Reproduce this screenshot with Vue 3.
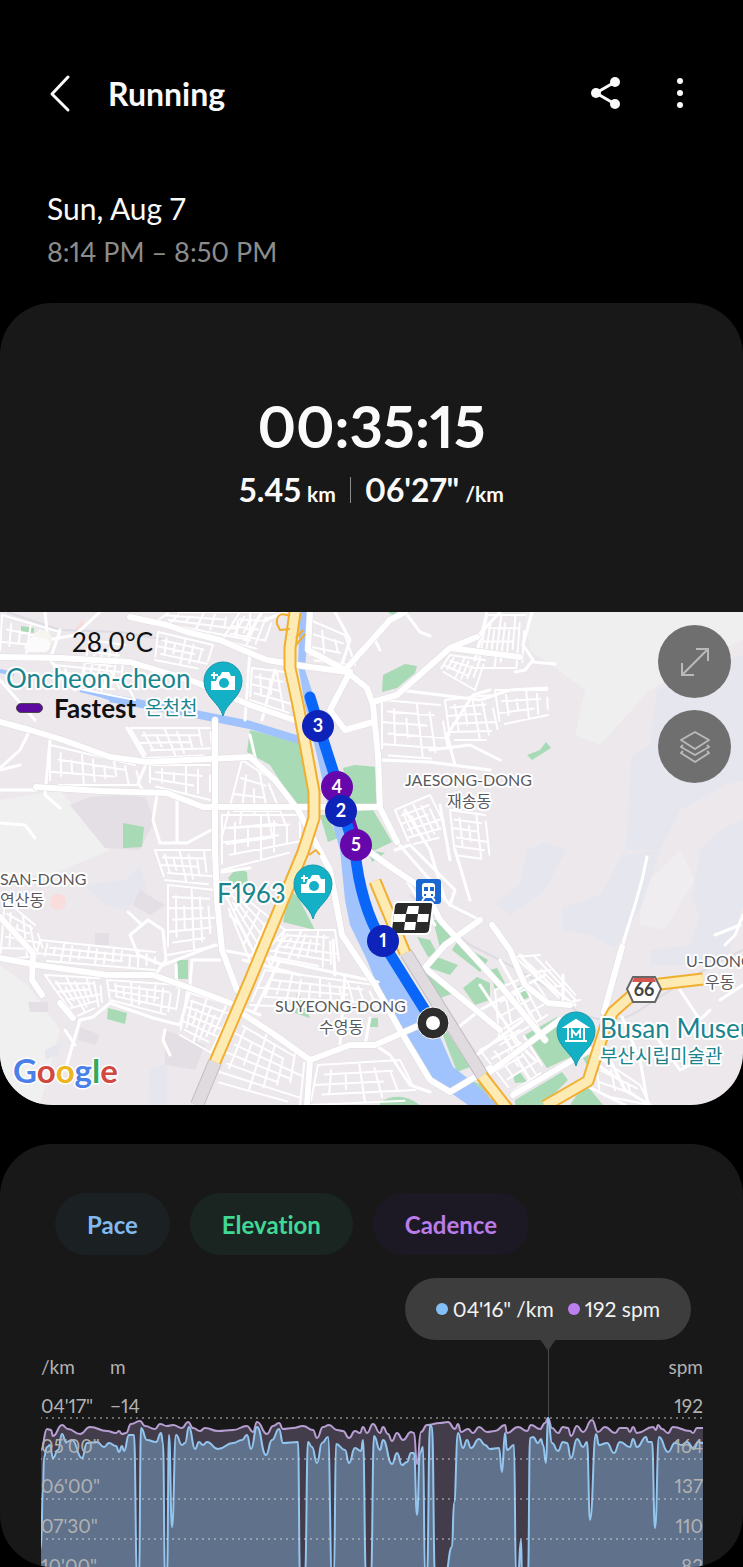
<template>
  <div class="screen">
    <header class="top-bar">
      <button class="icon-btn back" aria-label="Back">
        <svg width="24" height="40" viewBox="0 0 24 40" fill="none" stroke="currentColor" stroke-width="3" stroke-linecap="round" stroke-linejoin="round">
          <path d="M20 3 4 20 20 36"/>
        </svg>
      </button>
      <h1>Running</h1>
      <button class="icon-btn share" aria-label="Share">
        <svg width="32" height="36" viewBox="0 0 32 36" fill="currentColor">
          <path d="M25 6 6 17l19 11" fill="none" stroke="currentColor" stroke-width="3"/>
          <circle cx="25" cy="6" r="5"/><circle cx="6" cy="17" r="5"/><circle cx="25" cy="28" r="5"/>
        </svg>
      </button>
      <button class="icon-btn more" aria-label="More options">
        <svg width="8" height="32" viewBox="0 0 8 32" fill="currentColor">
          <circle cx="4" cy="3" r="3"/><circle cx="4" cy="15" r="3"/><circle cx="4" cy="27" r="3"/>
        </svg>
      </button>
    </header>

    <section class="when">
      <div class="day">Sun, Aug 7</div>
      <div class="hours">8:14 PM – 8:50 PM</div>
    </section>

    <section class="card summary">
      <div class="totals">
        <div class="duration">00:35:15</div>
        <div class="stats">
          <span class="stat">5.45<small>km</small></span>
          <span class="divider"></span>
          <span class="stat">06'27"<small>/km</small></span>
        </div>
      </div>

      <div class="map">
        <svg class="map-canvas" viewBox="0 612 743 493">
          <rect y="612" width="743" height="493" fill="#ece8ec"/>

          <!-- terrain -->
          <path d="M525 612H743V640L700 660 650 690 600 745 575 735 585 690 530 650Z" fill="#efefef"/>
          <path d="M0 800 60 790 110 850 50 875H0ZM0 965 28 985 60 1030 40 1105H0Z" fill="#f0f0f0"/>
          <path d="M640 890 680 850 695 880 665 930 640 925Z" fill="#efedef"/>
          <path d="M743 655 700 672 657 690 650 745 632 755 625 855 660 850 680 810 725 785 743 780ZM527 850 545 842 566 850 545 890 510 915 494 903 520 885ZM625 850H660L640 910 615 948 590 935 562 930 562 908 600 895ZM700 850 720 830 743 820V905L725 965H650V950L690 945 700 915 692 900ZM85 885 125 880 140 865 147 890 125 910 105 905ZM150 1070 167 1064 167 1105H148ZM45 1050 62 1042 58 1055 45 1060Z" fill="#e5e6ee"/>
          <path d="M70 805 90 797 115 795 145 797 155 820 140 850 105 848ZM80 1027 100 1035 95 1045 78 1040ZM140 890 165 905 150 915 133 905ZM165 1030 205 1045 195 1070 165 1065ZM95 933H109V945H95ZM28 1002H48V1012H30Z" fill="#e4dfe4"/>
          <circle cx="58" cy="902" r="8" fill="#f9dcdc"/>
          <path d="M75 630 82 619 85 628Z" fill="#f9dcdc"/>

          <!-- parks -->
          <path v-for="d in parks" :key="d" :d="d" fill="#a8dab5"/>

          <!-- water -->
          <path d="M0 671 14 674" stroke="#a0c3fd" stroke-width="4"/>
          <path d="M80 690 100 695 125 703" fill="none" stroke="#a0c3fd" stroke-width="4"/>
          <path d="M110 698 200 715 250 725 303 741" fill="none" stroke="#a0c3fd" stroke-width="8"/>
          <path d="M300 612 298 665 305 705 318 760 330 815 340 850 345 900 350 925 367 960 387 1010 433 1080 468 1105H500L488 1095 470 1080 453 1067 437 1030 420 1010 393 965 378 930 365 880 350 830 335 770 320 715 305 670 309 612Z" fill="#a0c3fd"/>

          <!-- streets -->
          <path d="M490 955Q550 985 575 1010 610 1030 640 1010 700 970 743 950M410 895 440 920 470 945 490 955M7 612 60 630 120 632 167 640" fill="none" stroke="#dcdce2" stroke-width="2"/>
          <g fill="none" stroke="#fff" stroke-linecap="round" stroke-linejoin="round">
            <path v-for="(b, i) in blocks" :key="i" :d="street(b)" stroke-width="2"/>
            <path v-for="d in lanes" :key="d" :d="d" stroke-width="3"/>
            <path v-for="d in roads" :key="d" :d="d" stroke="#e0dde2" stroke-width="7"/>
            <path v-for="d in roads" :key="d" :d="d" stroke-width="6"/>
          </g>

          <!-- railway -->
          <path d="M406 953 495 1096" stroke="#bfbcc2" stroke-width="13"/>
          <path d="M406 953 495 1096" stroke="#dfdbdf" stroke-width="11"/>
          <path d="M215 1062 197 1105" stroke="#c2bfc5" stroke-width="14"/>
          <path d="M215 1062 197 1105" stroke="#dfdbdf" stroke-width="12"/>

          <!-- highways -->
          <g fill="none" stroke-linejoin="round">
            <path v-for="d in highways" :key="d" :d="d" stroke="#f2ae2e" stroke-width="13"/>
            <path v-for="d in highways" :key="d" :d="d" stroke="#fdebb3" stroke-width="9"/>
            <path d="M290 616Q276 610 277 624L280 630 290 629M296 645 305 634M296 638 303 630M309 855 316 850 320 855" stroke="#f2ae2e" stroke-width="2"/>
          </g>

          <!-- route -->
          <g fill="none" stroke-linejoin="round" stroke-linecap="round" stroke-width="11">
            <path d="M347 812 359 850" stroke="#6a0bb5"/>
            <path d="M310 697 320 730 336 780 344 815 355 850Q360 905 383 943L433 1023" stroke="#0a66f8"/>
          </g>

          <!-- place pins -->
          <g v-for="p in pins" :key="p.x" :transform="`translate(${p.x} ${p.y})`">
            <path d="M0 35C-3 22-19 16-19 0A19 19 0 0 1 19 0C19 16 3 22 0 35Z" fill="#14b0c5" stroke="#1798aa"/>
            <g v-if="p.kind === 'photo'">
              <path d="M-5-5H-3L-1-9H6L8-5H12V9H-12V0H-7Z" fill="#fff"/>
              <circle cx="1" cy="2" r="5" fill="#14b0c5"/>
              <path d="M-9-9V-2M-12-6H-5" stroke="#fff" stroke-width="2"/>
            </g>
            <g v-else fill="none" stroke="#fff" stroke-width="2">
              <path d="M-11-4 0-11 11-4Z" fill="#fff"/>
              <path d="M-8-3V9M8-3V9M-11 10H11M-4 7V-1L0 4 4-1V7"/>
            </g>
          </g>

          <!-- station -->
          <rect x="416" y="879" width="25" height="25" rx="3" fill="#1b67d2"/>
          <rect x="422" y="883" width="13" height="15" rx="3" fill="#fff"/>
          <path d="M424 887H428V891H424ZM430 887H434V891H430ZM424 894H426V896H424ZM431 894H433V896H431Z" fill="#1b67d2"/>
          <path d="M425 897 422 901M432 897 435 901" stroke="#fff" stroke-width="2"/>

          <!-- finish flag -->
          <path d="M398 902H430Q434 902 433 906L430 930Q429 934 425 934H394Q390 934 391 930L394 906Q395 902 398 902Z" fill="#2a2a2a" stroke="#fff" stroke-width="2"/>
          <path d="M408 906H419L418 914H429L428 922H416L415 930H404L405 922H393L394 914H406Z" fill="#fff"/>
          <path d="M406 914H418L417 922H405Z" fill="#2a2a2a"/>

          <!-- kilometre markers -->
          <g v-for="k in markers" :key="k.n" class="marker">
            <circle :cx="k.x" :cy="k.y" r="16" :fill="k.fast ? '#6607ab' : '#0d23b9'"/>
            <text :x="k.x" :y="k.y + 6">{{ k.n }}</text>
          </g>
          <circle cx="433" cy="1023" r="16" fill="#2d2d2d" stroke="#fff" stroke-width="1"/>
          <circle cx="433" cy="1023" r="7" fill="#fff"/>

          <!-- road shield -->
          <path d="M633 977H655L661 989 655 1002H633L627 989Z" fill="#fff" stroke="#666" stroke-width="2"/>
          <path d="M634 978H654L656 982H632Z" fill="#d85650"/>
          <text class="shield" x="644" y="996">66</text>

          <!-- labels -->
          <text v-for="l in labels" :key="l.text" class="label" :class="l.kind" :x="l.x" :y="l.y">{{ l.text }}</text>
          <text class="brand" x="13" y="1083"><tspan fill="#4a80e8">G</tspan><tspan fill="#d24a3f">o</tspan><tspan fill="#edb61f">o</tspan><tspan fill="#4a80e8">g</tspan><tspan fill="#3aa757">l</tspan><tspan fill="#d24a3f">e</tspan></text>
        </svg>

        <div class="weather">
          <svg width="32" height="24" viewBox="0 0 32 24">
            <circle cx="20" cy="10" r="10" fill="#f7f5ef"/>
            <path d="M6 22A6 6 0 0 1 6 11 7 7 0 0 1 18 9 7 7 0 0 1 24 22Z" fill="#fbfbfb"/>
          </svg>
          <span>28.0°C</span>
        </div>
        <div class="legend"><i></i><span>Fastest</span></div>
        <div class="map-tools">
          <button class="tool" aria-label="Expand map">
            <svg width="30" height="30" viewBox="0 0 30 30" fill="none" stroke="currentColor" stroke-width="2">
              <path d="M2 28 28 2M16 2H28V14M2 16V28H14"/>
            </svg>
          </button>
          <button class="tool" aria-label="Map layers">
            <svg width="32" height="34" viewBox="0 0 32 34" fill="none" stroke="currentColor" stroke-width="2" stroke-linejoin="round">
              <path d="M16 2 30 10 16 19 2 10Z"/>
              <path d="M4 15 2 17 16 25 30 17 28 15M4 21 2 23 16 32 30 23 28 21"/>
            </svg>
          </button>
        </div>
      </div>
    </section>

    <section class="card details">
      <div class="chips">
        <button class="chip pace">Pace</button>
        <button class="chip elevation">Elevation</button>
        <button class="chip cadence">Cadence</button>
      </div>

      <div class="chart">
        <div class="tooltip">
          <i class="dot pace"></i><span>04'16" /km</span>
          <i class="dot cadence"></i><span>192 spm</span>
        </div>
        <div class="cursor"></div>
        <div class="units">
          <span class="left">/km</span>
          <span class="mid">m</span>
          <span class="right">spm</span>
        </div>
        <div class="plot">
          <svg viewBox="0 0 662 181" preserveAspectRatio="none">
            <path :d="area(cadence)" fill="#433d4b"/>
            <path :d="area(pace)" fill="#5f718b"/>
            <path :d="curve(cadence)" fill="none" stroke="#b79ed3" stroke-width="2"/>
            <path :d="curve(pace)" fill="none" stroke="#93c5ee" stroke-width="2" stroke-linejoin="round"/>
            <path d="M0 32H662M0 73H662M0 113H662M0 153H662" class="grid"/>
          </svg>
          <div v-for="(t, i) in ticks" :key="i" class="tick">
            <span class="left">{{ t.pace }}</span>
            <span class="mid">{{ t.elevation }}</span>
            <span class="right">{{ t.cadence }}</span>
          </div>
        </div>
      </div>
    </section>
  </div>
</template>

<script setup>
const markers = [
  { n: 3, x: 318, y: 726 },
  { n: 4, x: 337, y: 787, fast: true },
  { n: 2, x: 341, y: 811 },
  { n: 5, x: 356, y: 845, fast: true },
  { n: 1, x: 383, y: 941 }
]

const pins = [
  { kind: 'photo', x: 223, y: 681 },
  { kind: 'photo', x: 313, y: 884 },
  { kind: 'museum', x: 576, y: 1031 }
]

const labels = [
  { text: 'Oncheon-cheon', x: 6, y: 688, kind: 'poi' },
  { text: '온천천', x: 145, y: 715, kind: 'poi ko' },
  { text: 'F1963', x: 217, y: 903, kind: 'poi' },
  { text: 'Busan Museum', x: 600, y: 1038, kind: 'poi' },
  { text: '부산시립미술관', x: 600, y: 1063, kind: 'poi ko' },
  { text: 'SAN-DONG', x: 0, y: 885, kind: 'area' },
  { text: '연산동', x: 0, y: 906, kind: 'area' },
  { text: 'JAESONG-DONG', x: 405, y: 786, kind: 'area' },
  { text: '재송동', x: 447, y: 807, kind: 'area' },
  { text: 'SUYEONG-DONG', x: 275, y: 1012, kind: 'area' },
  { text: '수영동', x: 319, y: 1033, kind: 'area' },
  { text: 'U-DONG', x: 686, y: 967, kind: 'area' },
  { text: '우동', x: 705, y: 988, kind: 'area' }
]

const parks = [
  'M21 626 34 628V633L21 631Z',
  'M123 823 144 827 142 847 123 848Z',
  'M250 730 300 743 312 805 295 805 270 765 247 752Z',
  'M383 675 405 664 417 666 415 673 397 688 382 692Z',
  'M343 768 355 765 377 767 378 805H350Z',
  'M350 812 373 810 392 842 365 855Z',
  'M320 815 327 815 338 838 328 842Z',
  'M527 755 540 750 546 742 551 748 532 760Z',
  'M228 878 237 868 247 872 248 888H235Z',
  'M177 960H188V979H178Z',
  'M108 1008 127 1013 125 1024 107 1019Z',
  'M290 890 298 897 315 930 283 922Z',
  'M368 850 385 853 372 862ZM388 612H399L394 616Z',
  'M417 937 430 940 437 953 428 957ZM433 920 442 920 453 940 440 948ZM457 942 488 960 480 972 452 950Z',
  'M427 967 437 957 458 965 450 975ZM423 972 457 992 440 998ZM463 988 477 977 490 983V1000L475 1005Z',
  'M441 1030 447 1032 470 1067 457 1072ZM463 1077 487 1087 488 1095Z',
  'M380 1102Q400 1090 420 1105H380ZM297 993 302 1000 310 1018 295 1013ZM370 1018H378V1027H370Z',
  'M490 970 497 968 505 983 495 990ZM515 988 522 985 529 997 523 1000Z',
  'M525 1035 557 1017 580 1018 592 1045 575 1055 547 1068Z',
  'M513 1075 520 1072 527 1082 515 1083ZM515 1100 562 1072 568 1080 543 1105H515Z',
  'M580 1053 590 1050 587 1065ZM570 1105 585 1083 603 1105Z'
]

const highways = [
  'M295 612 290 648V668L298 705 314 792V818L303 852 250 980 215 1062',
  'M545 1106 588 1081 598 1050 606 1025 613 1012 630 997 660 984 703 979',
  'M375 881 405 953',
  'M482 1076 510 1112'
]

const roads = [
  'M130 617 167 625 187 632 220 640 250 653 267 660 303 666 347 672 367 688 373 705 378 755 380 808 397 842',
  'M0 657 60 658 130 662 190 680 215 690 250 705 300 722',
  'M0 722 30 730 63 740 110 757 147 762 250 757 275 780 298 810 330 870 342 935 375 985 400 1030 430 1080 450 1092 490 1068',
  'M36 787 100 791 167 793 203 807H378',
  'M215 720V850L217 900 222 950 237 990',
  'M373 702 397 695 450 648 477 637M450 648 520 657',
  'M0 958 37 965 107 975 153 975 187 987 230 1003',
  'M0 917 33 953 32 980 42 995M60 1003 73 1018',
  'M350 672 330 710 345 730 373 722M310 612 308 650 345 670 390 620 405 612',
  'M310 1060 350 1045 375 1045 420 1025M310 1060 307 1105M310 1060 275 1035 240 1012',
  'M492 925 510 950 525 985 548 1003 570 1005M490 1072 560 1020',
  'M622 947 604 1012M513 1095 590 1050',
  'M367 850 395 870 425 890 440 920 500 985 545 1040',
  'M423 970 445 945 480 920M425 968 500 1030'
]

const lanes = [
  'M0 680 35 720M45 612 48 640 75 635 100 612M60 630 50 660 75 690M127 728 147 762 138 783 145 793',
  'M20 765 0 770M50 740 45 795 60 808M30 730 20 750 0 768M0 823 25 825 35 838',
  'M157 795 153 820 160 843 187 843 215 828M177 797V843',
  'M80 1020 93 1017 110 1003 153 1018 180 1025 191 987M128 912 142 925 148 920 163 930 166 960 155 975M142 925 130 935 138 955 163 965',
  'M163 965 215 945M190 985 192 960 220 960M177 987 176 965M222 872 250 868M230 915 240 925 250 945',
  'M165 1030 163 1040 170 1055M70 1055 65 1070 80 1020M65 1030 75 1045',
  'M222 950 300 965 345 975 378 982M230 1003 260 1015M0 790H36',
  'M397 842 430 880 450 905M487 612 475 660M380 760 430 762 490 770',
  'M245 640 262 612M265 620 285 612M250 735 258 770 275 780M250 650 245 720M275 670 262 720',
  'M335 612 350 640 340 670M390 620 375 640 380 650M405 612 420 632 430 636',
  'M400 690 480 700 510 690 547 688M477 637 500 612M455 765 447 735 473 695 490 690M430 750 470 745 500 760',
  'M532 612 523 645 533 660 525 670 515 672M533 662 555 664M440 805 450 860M405 810 430 850 445 900',
  'M647 857 642 880 635 905 627 930 622 947M563 975V1000M622 1017 640 1060 648 1105M605 1050 625 1090 650 1105',
  'M680 990 700 1020 710 1010M743 915 735 935 725 945M740 925 715 935M655 1035 680 1070 700 1060',
  'M375 1045 390 1055 410 1085 430 1092M333 940 335 975M345 975 340 1045M370 1018 365 1045',
  'M255 1010 280 960M243 960 300 975M400 870 435 925M395 850 410 845 455 890 450 905 480 920',
  'M455 1030 480 1010 545 975M470 1060 530 1015M480 985 520 1045 535 1060M500 960 545 1040M500 1030 530 1080',
  'M585 1085 625 1105M620 1080 590 1060M455 850 470 900M720 1000 743 985M520 955 540 980 575 1005'
]

// corners clockwise from the top left, then the number of streets each way
const blocks = [
  [[2, 615], [60, 632], [52, 655], [0, 655], 6, 3],
  [[158, 632], [213, 645], [205, 670], [155, 660], 6, 4],
  [[90, 640], [125, 645], [120, 690], [80, 685], 5, 4],
  [[155, 622], [250, 640], [250, 612], [170, 612], 7, 3],
  [[55, 665], [120, 672], [135, 700], [60, 685], 7, 3],
  [[130, 728], [210, 728], [213, 755], [148, 758], 7, 4],
  [[50, 745], [135, 765], [140, 785], [50, 785], 8, 3],
  [[150, 765], [210, 765], [210, 800], [150, 785], 5, 3],
  [[155, 850], [212, 850], [215, 885], [165, 880], 7, 4],
  [[168, 885], [215, 890], [220, 945], [168, 955], 6, 6],
  [[40, 940], [155, 952], [155, 970], [35, 960], 14, 3],
  [[5, 900], [35, 925], [45, 955], [0, 960], 5, 5],
  [[45, 975], [100, 978], [102, 1005], [75, 1017], 8, 5],
  [[107, 980], [180, 985], [175, 1017], [110, 1000], 9, 4],
  [[187, 992], [240, 1008], [215, 1055], [180, 1035], 8, 6],
  [[235, 890], [285, 930], [262, 990], [225, 900], 6, 5],
  [[285, 930], [335, 930], [340, 970], [262, 955], 9, 5],
  [[265, 970], [375, 985], [390, 1010], [250, 1005], 12, 4],
  [[240, 1012], [305, 1055], [300, 1105], [210, 1080], 7, 7],
  [[318, 1065], [400, 1060], [420, 1100], [310, 1105], 6, 4],
  [[240, 612], [275, 612], [262, 650], [222, 640], 5, 4],
  [[252, 668], [285, 672], [295, 715], [250, 700], 4, 4],
  [[242, 760], [265, 775], [290, 835], [220, 845], 4, 5],
  [[222, 815], [300, 815], [300, 850], [222, 870], 6, 4],
  [[487, 615], [525, 615], [522, 668], [478, 668], 8, 4],
  [[450, 655], [485, 660], [475, 690], [440, 670], 7, 3],
  [[445, 700], [490, 695], [500, 740], [450, 740], 5, 5],
  [[495, 690], [547, 690], [548, 715], [500, 725], 5, 3],
  [[382, 700], [440, 705], [450, 760], [382, 755], 5, 5],
  [[395, 810], [430, 795], [450, 835], [410, 845], 6, 5],
  [[450, 810], [485, 815], [490, 860], [455, 855], 4, 5],
  [[310, 620], [345, 635], [355, 665], [310, 660], 3, 3],
  [[495, 990], [530, 975], [555, 1010], [500, 1045], 4, 4],
  [[480, 1050], [520, 1030], [545, 1070], [512, 1092], 4, 4],
  [[515, 957], [540, 955], [580, 1000], [565, 1003], 4, 3],
  [[595, 1055], [640, 1085], [650, 1105], [600, 1095], 3, 3]
]

const street = ([a, b, c, d, cols, rows]) => {
  const mix = (p, q, t) => [p[0] + (q[0] - p[0]) * t, p[1] + (q[1] - p[1]) * t]
  const line = (p, q) => `M${p[0].toFixed(1)} ${p[1].toFixed(1)}L${q[0].toFixed(1)} ${q[1].toFixed(1)}`
  let path = ''
  for (let i = 0; i <= cols; i++) {
    const top = mix(a, b, i / cols)
    const bottom = mix(d, c, i / cols)
    path += line(mix(top, bottom, (i % 3) * 0.15), mix(top, bottom, 1 - ((i + 1) % 4) * 0.12))
  }
  for (let j = 0; j <= rows; j++) {
    const left = mix(a, d, j / rows)
    const right = mix(b, c, j / rows)
    path += line(mix(left, right, (j % 2) * 0.1), mix(left, right, 1 - (j % 3) * 0.14))
  }
  return path
}

const ticks = [
  { pace: '04\'17"', elevation: '−14', cadence: 192 },
  { pace: '05\'00"', cadence: 164 },
  { pace: '06\'00"', cadence: 137 },
  { pace: '07\'30"', cadence: 110 },
  { pace: '10\'00"', cadence: 82 }
]

const pace = [
  [0, 162], [2, 101], [3, 71], [6, 61], [9, 59], [12, 72], [17, 64], [21, 48], [25, 56], [31, 54], [41, 72], [46, 57], [56, 56],
  [63, 61], [68, 57], [75, 60], [78, 66], [81, 60], [83, 65], [88, 49], [93, 49], [96, 190], [98, 190], [100, 42], [106, 54],
  [115, 56], [120, 47], [122, 57], [124, 190], [126, 190], [128, 49], [131, 141], [135, 49], [141, 59], [144, 57], [148, 41],
  [154, 63], [158, 56], [162, 59], [166, 56], [177, 63], [192, 57], [201, 54], [206, 49], [210, 63], [216, 41], [225, 69],
  [231, 54], [238, 43], [242, 57], [257, 56], [259, 190], [264, 190], [267, 56], [271, 61], [276, 77], [281, 57], [287, 51],
  [291, 190], [293, 190], [295, 58], [304, 64], [308, 77], [314, 62], [320, 65], [322, 54], [325, 190], [330, 190], [333, 50],
  [339, 64], [342, 54], [351, 78], [356, 67], [361, 79], [366, 76], [370, 67], [373, 67], [376, 129], [379, 67], [382, 61],
  [384, 190], [386, 190], [389, 39], [391, 41], [394, 190], [404, 190], [411, 161], [413, 117], [417, 47], [422, 62], [426, 54],
  [430, 62], [438, 53], [444, 59], [449, 63], [458, 62], [461, 86], [464, 47], [466, 64], [473, 59], [475, 190], [477, 190],
  [480, 154], [481, 190], [487, 190], [489, 52], [492, 51], [497, 57], [500, 53], [502, 59], [505, 77], [507, 32], [511, 57],
  [517, 65], [522, 56], [526, 57], [530, 72], [536, 53], [542, 61], [546, 56], [549, 134], [555, 48], [558, 59], [566, 57],
  [573, 67], [579, 56], [589, 61], [592, 53], [596, 61], [605, 51], [607, 56], [611, 56], [614, 142], [618, 51], [627, 66],
  [634, 57], [641, 59], [646, 56], [653, 63], [657, 56], [662, 57]
]

const cadence = [
  [0, 64], [6, 43], [10, 44], [12, 50], [21, 39], [27, 43], [39, 48], [49, 41], [66, 45], [75, 47], [78, 45], [81, 48], [85, 47],
  [90, 38], [99, 35], [104, 40], [114, 43], [119, 38], [126, 40], [132, 39], [141, 42], [147, 36], [152, 42], [159, 45], [164, 42],
  [177, 45], [192, 44], [206, 40], [212, 46], [216, 36], [226, 48], [232, 40], [238, 37], [242, 43], [252, 42], [262, 40],
  [272, 44], [276, 52], [282, 41], [288, 39], [296, 44], [302, 45], [308, 52], [314, 45], [319, 47], [322, 41], [326, 47],
  [332, 38], [339, 47], [342, 41], [347, 48], [351, 55], [356, 47], [362, 54], [370, 46], [373, 47], [376, 78], [380, 46],
  [386, 39], [399, 37], [407, 36], [414, 43], [417, 38], [420, 46], [427, 43], [432, 47], [438, 41], [446, 46], [454, 45],
  [464, 39], [466, 47], [477, 41], [486, 45], [490, 39], [499, 43], [504, 37], [507, 32], [511, 42], [517, 47], [522, 41],
  [527, 42], [530, 50], [536, 40], [542, 46], [551, 34], [557, 46], [564, 41], [574, 47], [579, 42], [586, 42], [589, 46],
  [592, 41], [596, 47], [612, 41], [615, 44], [617, 39], [621, 43], [627, 47], [632, 41], [649, 45], [652, 47], [656, 42], [662, 42]
]

const curve = (points) => points.reduce((d, [x, y], i) => {
  if (!i) return `M${x} ${y}`
  const [px, py] = points[i - 1]
  const mid = (px + x) / 2
  return `${d}C${mid} ${py} ${mid} ${y} ${x} ${y}`
}, '')

const area = (points) => `${curve(points)}V181H0Z`
</script>

<style>
body {
  margin: 0;
  background: #000;
}
</style>

<style scoped>
.screen {
  background: #000;
  color: #fafafa;
  font-family: Lato, "Noto Sans CJK KR", sans-serif;
  font-variant-ligatures: none;
  font-variant-numeric: proportional-nums;
}

button {
  border: none;
  padding: 0;
  font: inherit;
  cursor: pointer;
}

.top-bar {
  display: flex;
  align-items: center;
  padding: 64px 59px 0 48px;
  height: 60px;
}

.top-bar h1 {
  margin: 0 auto 0 36px;
  font-size: 32px;
  line-height: 48px;
  font-weight: 700;
}

.icon-btn {
  background: none;
  color: #fafafa;
  display: flex;
}

.share { margin-right: 54px; }

.when {
  padding: 62px 47px 29px;
  font-size: 30px;
  line-height: 44px;
}

.hours {
  color: #8c8c8c;
  font-size: 27px;
}

.card {
  background: #181818;
  border-radius: 52px;
  overflow: hidden;
}

.totals {
  padding: 84px 24px 97px;
  display: flex;
  flex-direction: column;
  align-items: center;
}

.duration {
  font-size: 58px;
  line-height: 78px;
  font-weight: 700;
}

.stats {
  display: flex;
  align-items: center;
  gap: 14px;
  font-size: 32px;
  line-height: 50px;
  font-weight: 700;
}

.stats small {
  margin-left: 6px;
  font-size: 21px;
  line-height: 24px;
}

.divider {
  width: 1px;
  height: 26px;
  background: #8c8c8c;
}

.map {
  position: relative;
  color: #111;
}

.map-canvas {
  display: block;
  width: 100%;
}

.marker text {
  fill: #fff;
  font-size: 18px;
  font-weight: 700;
  text-anchor: middle;
}

.shield {
  fill: #444;
  font-size: 18px;
  font-weight: 700;
  text-anchor: middle;
}

.label {
  stroke: #fff;
  stroke-width: 4px;
  stroke-linejoin: round;
  paint-order: stroke;
}

.label.area {
  fill: #5a5a5e;
  font-size: 16px;
}

.label.poi {
  fill: #1b858f;
  font-size: 26px;
}

.label.poi.ko { font-size: 19px; }

.brand {
  font-size: 33px;
  font-weight: 700;
  stroke: #fff;
  stroke-width: 3px;
  paint-order: stroke;
}

.weather,
.legend {
  position: absolute;
  display: flex;
  align-items: center;
}

.weather {
  top: 12px;
  left: 22px;
  gap: 18px;
  font-size: 26px;
  line-height: 36px;
}

.legend {
  top: 80px;
  left: 16px;
  gap: 11px;
  font-size: 26px;
  line-height: 32px;
  font-weight: 700;
}

.legend i {
  box-sizing: border-box;
  width: 27px;
  height: 10px;
  border-radius: 5px;
  background: #5c0a9e;
  border: 1px solid #4a4a4a;
}

.map-tools {
  position: absolute;
  top: 13px;
  right: 12px;
  display: flex;
  flex-direction: column;
  gap: 12px;
}

.tool {
  width: 73px;
  height: 73px;
  border-radius: 50%;
  background: #6f6f6f;
  color: #b9b9b9;
  display: flex;
  align-items: center;
  justify-content: center;
}

.details { margin-top: 39px; }

.chips {
  display: flex;
  gap: 20px;
  padding: 49px 55px 0;
}

.chip {
  height: 62px;
  padding: 0 32px;
  border-radius: 31px;
  font-size: 24px;
  font-weight: 700;
}

.chip.pace { background: #1b2023; color: #82b9ee; }
.chip.elevation { background: #1a2521; color: #41d795; }
.chip.cadence { background: #1d1924; color: #b97ce8; }

.chart {
  position: relative;
  margin: 23px 40px 0 41px;
  color: #b2b2b2;
  font-size: 19px;
}

.tooltip {
  width: fit-content;
  margin: 0 12px 0 auto;
  padding: 0 31px;
  border-radius: 31px;
  background: #3d3d3d;
  color: #f2f2f2;
  display: flex;
  align-items: center;
  line-height: 62px;
  font-size: 21px;
}

.dot {
  width: 12px;
  height: 12px;
  margin-right: 5px;
  border-radius: 50%;
}

.dot.pace { background: #84c0f8; }
.dot.cadence { background: #bb7ff0; margin-left: 14px; }

.cursor {
  position: absolute;
  top: 61px;
  bottom: 148px;
  left: 76.6%;
  width: 1px;
  background: #4a4a4a;
}

.cursor::before {
  content: "";
  position: absolute;
  left: -8px;
  border: 8px solid transparent;
  border-top: 12px solid #3d3d3d;
  border-bottom: none;
}

.units,
.tick {
  display: grid;
  grid-template-columns: 69px 1fr auto;
  line-height: 40px;
}

.units { margin-top: 8px; line-height: 38px; }

.plot {
  position: relative;
  height: 181px;
  overflow: hidden;
}

.plot svg {
  position: absolute;
  inset: 0;
  width: 100%;
  height: 100%;
}

.tick { position: relative; }

.grid {
  stroke: #e6e6e6;
  stroke-opacity: 0.55;
  stroke-width: 2;
  stroke-linecap: round;
  stroke-dasharray: 0 6;
}
</style>
